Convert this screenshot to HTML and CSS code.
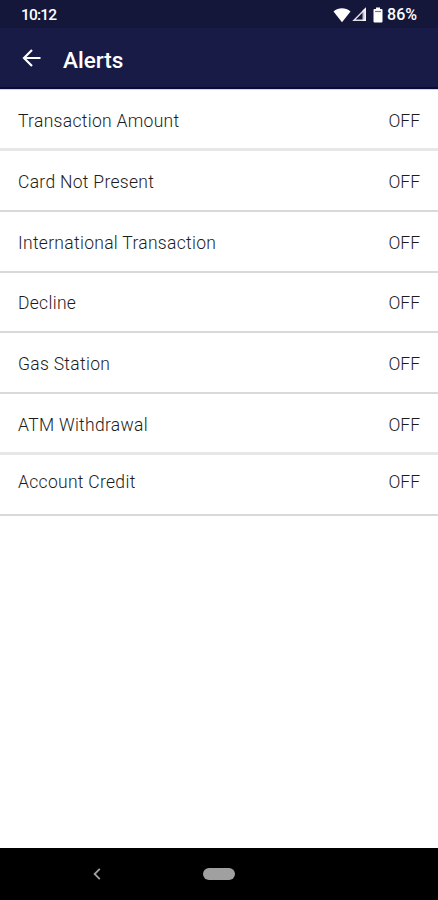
FILE: index.html
```html
<!DOCTYPE html>
<html lang="en">
  <head>
    <meta charset="UTF-8" />
    <meta name="viewport" content="width=device-width, initial-scale=1.0" />
    <title>Alerts</title>
    <link rel="stylesheet" href="styles.css" />
  </head>
  <body>
    <div class="screen">
      <!-- status bar -->
      <div class="status-bar">
        <span class="time">10:12</span>
        <div class="status-icons">
          <svg class="wifi" width="18" height="16" viewBox="0 0 18 16">
            <path d="M0.5 4.5C5.5 0.2 12.5 0.2 17.5 4.5L9 15.2Z" fill="#fff" />
          </svg>
          <svg class="signal" width="15" height="15" viewBox="0 0 15 15">
            <path d="M2 13.2L13.2 2V13.2Z" fill="#14163a" stroke="#dedee6" stroke-width="1.5" />
            <path d="M10.5 3.5L14 0.5V14H10.5Z" fill="#fff" fill-opacity="0.75" />
          </svg>
          <svg class="battery" width="10" height="16" viewBox="0 0 10 16">
            <path d="M3 0.5H7V2H8.5Q9.5 2 9.5 3V14.5Q9.5 15.5 8.5 15.5H1.5Q0.5 15.5 0.5 14.5V3Q0.5 2 1.5 2H3Z" fill="#fff" />
            <path d="M2 4.5H8" stroke="#77788d" stroke-width="1.2" />
          </svg>
          <span class="percent">86%</span>
        </div>
      </div>

      <!-- header -->
      <header class="header">
        <svg class="back" width="20" height="20" viewBox="0 0 20 20">
          <path d="M18.5 10H2.5M10 2L2 10L10 18" fill="none" stroke="#fff" stroke-width="2.2" />
        </svg>
        <h1 class="title">Alerts</h1>
      </header>

      <!-- alert list -->
      <ul class="alerts">
        <li class="alert thick"><span>Transaction Amount</span><span class="state">OFF</span></li>
        <li class="alert"><span>Card Not Present</span><span class="state">OFF</span></li>
        <li class="alert"><span>International Transaction</span><span class="state">OFF</span></li>
        <li class="alert short"><span>Decline</span><span class="state">OFF</span></li>
        <li class="alert"><span>Gas Station</span><span class="state">OFF</span></li>
        <li class="alert thick"><span>ATM Withdrawal</span><span class="state">OFF</span></li>
        <li class="alert last"><span>Account Credit</span><span class="state">OFF</span></li>
      </ul>

      <!-- android navigation -->
      <nav class="nav-bar">
        <svg class="nav-back" width="8" height="12" viewBox="0 0 8 12">
          <path d="M6.8 0.8L1.6 6L6.8 11.2" fill="none" stroke="#a0a0a0" stroke-width="1.8" />
        </svg>
        <span class="nav-home"></span>
      </nav>
    </div>
  </body>
</html>
```
FILE: styles.css
```css
* {
  box-sizing: border-box;
}

body {
  margin: 0;
  font-family: Roboto, "Liberation Sans", sans-serif;
  background-color: white;
}

.screen {
  height: 900px;
  display: flex;
  flex-direction: column;
}

.status-bar {
  height: 28px;
  padding: 1px 21px 0;
  display: flex;
  align-items: center;
  justify-content: space-between;
  background-color: #14163a;
  color: white;
}

.time {
  font-size: 15.5px;
  font-weight: 500;
  letter-spacing: -0.8px;
}

.status-icons {
  display: flex;
  align-items: center;
}

.signal {
  margin-left: 1px;
}

.battery {
  margin-left: 6px;
}

.percent {
  margin-left: 4px;
  font-size: 16px;
  font-weight: 500;
}

.header {
  height: 61px;
  padding-left: 22px;
  display: flex;
  align-items: center;
  background-color: #171b46;
  border-bottom: 2px solid #090b38;
  color: white;
}

.title {
  margin: 4px 0 0 21px;
  font-size: 22.5px;
  font-weight: 500;
}

.alerts {
  flex: 1;
  margin: 0;
  padding: 0;
  list-style: none;
  border-top: 1px solid #d3d3e2;
}

.alert {
  height: 61px;
  padding: 2px 18px 0;
  display: flex;
  align-items: center;
  justify-content: space-between;
  border-bottom: 2px solid #d9d9d9;
  color: #1c1c1c;
  font-size: 17.5px;
  font-weight: 300;
  letter-spacing: 0.3px;
}

.thick {
  padding-top: 4px;
  border-bottom: 3px solid #e7e7e7;
}

.short {
  height: 60px;
}

.last {
  padding-top: 0;
  padding-bottom: 6px;
}

.state {
  letter-spacing: 0;
}

.nav-bar {
  height: 52px;
  padding-left: 93px;
  display: flex;
  align-items: center;
  background-color: black;
}

.nav-home {
  width: 32px;
  height: 12px;
  margin-left: 102px;
  border-radius: 6px;
  background-color: #a0a0a0;
}
```
